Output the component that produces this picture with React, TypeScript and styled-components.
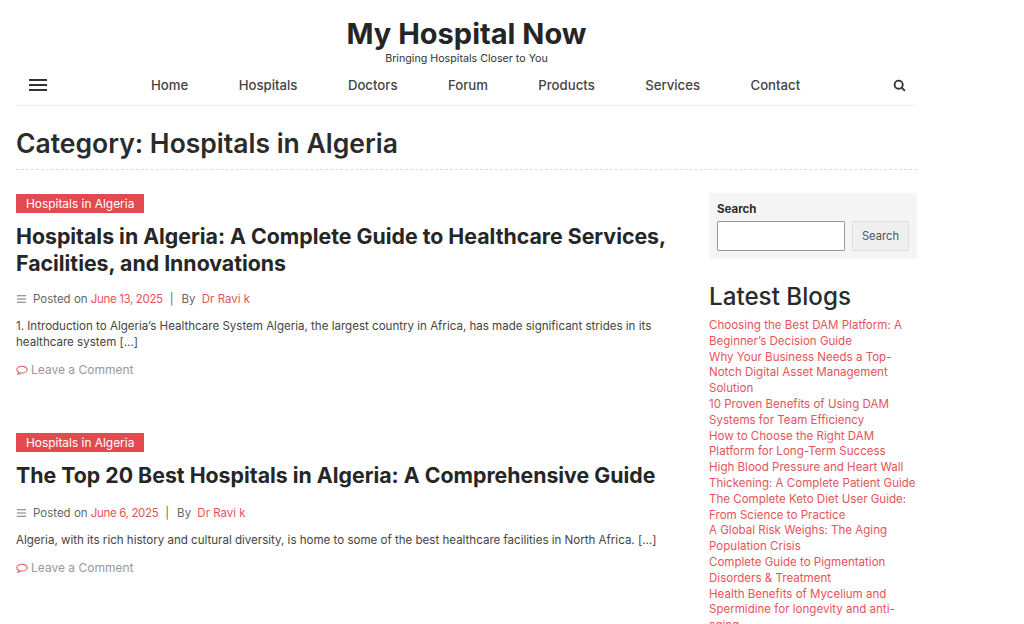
import { createGlobalStyle } from "styled-components";
import styled from "styled-components";

const NAV_ITEMS = ["Home", "Hospitals", "Doctors", "Forum", "Products", "Services", "Contact"];

const BLOGS = [
  "Choosing the Best DAM Platform: A Beginner’s Decision Guide",
  "Why Your Business Needs a Top-Notch Digital Asset Management Solution",
  "10 Proven Benefits of Using DAM Systems for Team Efficiency",
  "How to Choose the Right DAM Platform for Long-Term Success",
  "High Blood Pressure and Heart Wall Thickening: A Complete Patient Guide",
  "The Complete Keto Diet User Guide: From Science to Practice",
  "A Global Risk Weighs: The Aging Population Crisis",
  "Complete Guide to Pigmentation Disorders & Treatment",
  "Health Benefits of Mycelium and Spermidine for longevity and anti-aging",
];

const POSTS = [
  {
    title: "Hospitals in Algeria: A Complete Guide to Healthcare Services, Facilities, and Innovations",
    date: "June 13, 2025",
    metaGap: 14,
    excerpt:
      "1. Introduction to Algeria’s Healthcare System Algeria, the largest country in Africa, has made significant strides in its healthcare system […]",
  },
  {
    title: "The Top 20 Best Hospitals in Algeria: A Comprehensive Guide",
    date: "June 6, 2025",
    metaGap: 16,
    excerpt:
      "Algeria, with its rich history and cultural diversity, is home to some of the best healthcare facilities in North Africa. […]",
  },
];

export default function App() {
  return (
    <>
      <GlobalStyle />
      <Page>
        <Branding>
          <SiteTitle>My Hospital Now</SiteTitle>
          <Tagline>Bringing Hospitals Closer to You</Tagline>
        </Branding>
        <NavBar>
          <Burger aria-label="Menu">
            <span />
            <span />
            <span />
          </Burger>
          <NavList>
            {NAV_ITEMS.map((item) => (
              <NavLink key={item}>{item}</NavLink>
            ))}
          </NavList>
          <SearchIcon viewBox="0 0 24 24" aria-hidden="true">
            <circle cx="10.5" cy="10.5" r="7.5" />
            <line x1="16" y1="16" x2="22" y2="22" />
          </SearchIcon>
        </NavBar>
        <PageTitle>Category: Hospitals in Algeria</PageTitle>
        <Columns>
          <Main>
            {POSTS.map((post) => (
              <Post key={post.date}>
                <Badge>Hospitals in Algeria</Badge>
                <PostTitle>{post.title}</PostTitle>
                <Meta $gap={post.metaGap}>
                  <MetaIcon viewBox="0 0 12 10" aria-hidden="true">
                    <path d="M1 1.5h10M1 5h10M1 8.5h10" />
                  </MetaIcon>
                  Posted on <DateLink>{post.date}</DateLink>
                  <Sep>|</Sep>
                  By <Author>Dr Ravi k</Author>
                </Meta>
                <Excerpt>{post.excerpt}</Excerpt>
                <Comment>
                  <CommentIcon viewBox="0 0 14 12" aria-hidden="true">
                    <path d="M7 1C3.700 1 1 2.700 1 5c0 1.300.9 2.400 2.200 3.100-.1.8-.5 1.500-1 2.200 1.100-.2 2.200-.8 3-1.500.6.1 1.200.2 1.800.2 3.300 0 6-1.800 6-4S10.300 1 7 1z" />
                  </CommentIcon>
                  Leave a Comment
                </Comment>
              </Post>
            ))}
          </Main>
          <Sidebar>
            <SearchBox>
              <SearchLabel>Search</SearchLabel>
              <SearchRow>
                <SearchInput />
                <SearchButton>Search</SearchButton>
              </SearchRow>
            </SearchBox>
            <WidgetTitle>Latest Blogs</WidgetTitle>
            <BlogList>
              {BLOGS.map((blog) => (
                <li key={blog}>{blog}</li>
              ))}
            </BlogList>
          </Sidebar>
        </Columns>
      </Page>
    </>
  );
}

const GlobalStyle = createGlobalStyle`
  html, body {
    margin: 0;
    height: 624px;
    overflow: hidden;
    background: #fff;
  }
  body {
    font-family: Inter, "Liberation Sans", sans-serif;
    color: #2a2a2a;
  }
`;

const Page = styled.div`
  width: 901px;
  margin-left: 16px;
`;

const Branding = styled.header`
  display: flex;
  flex-direction: column;
  align-items: center;
  padding-top: 15px;
  height: 52px;
`;

const SiteTitle = styled.h1`
  margin: 0;
  font-size: 29px;
  line-height: 37px;
  font-weight: 700;
  color: #252525;
`;

const Tagline = styled.p`
  margin: -1px 0 0;
  font-size: 10.7px;
  line-height: 15px;
  color: #333;
`;

const NavBar = styled.nav`
  position: relative;
  display: flex;
  align-items: center;
  height: 38px;
  padding-left: 135px;
  border-bottom: 1px solid #eee;
`;

const Burger = styled.div`
  position: absolute;
  left: 13px;
  top: 12px;
  display: flex;
  flex-direction: column;
  gap: 3.5px;
  width: 18px;

  span {
    height: 1.5px;
    background: #333;
  }
`;

const NavList = styled.div`
  display: flex;
  gap: 50.4px;
  padding-bottom: 2px;
`;

const NavLink = styled.a`
  font-size: 13.2px;
  line-height: 20px;
  font-weight: 500;
  color: #444;
`;

const SearchIcon = styled.svg`
  position: absolute;
  right: 11px;
  top: 12px;
  width: 13px;
  height: 13px;
  fill: none;
  stroke: #333;
  stroke-width: 3.4;
`;

const PageTitle = styled.h2`
  margin: 0;
  height: 63px;
  line-height: 75px;
  font-size: 26.5px;
  font-weight: 600;
  color: #2b2b2b;
  border-bottom: 1px dashed #ddd;
`;

const Columns = styled.div`
  display: flex;
  justify-content: space-between;
  padding-top: 23px;
`;

const Main = styled.main`
  width: 662px;
  margin-top: -1px;
`;

const Post = styled.article`
  height: 239px;

  & + & {
    height: auto;
  }
`;

const Badge = styled.span`
  display: inline-block;
  height: 19px;
  padding: 0 10px;
  background: #e14b50;
  color: #fff;
  font-size: 11.9px;
  line-height: 19px;
`;

const PostTitle = styled.h3`
  margin: 10px 0 0;
  font-size: 21.3px;
  line-height: 27px;
  font-weight: 700;
  color: #262626;
`;

const Meta = styled.div<{ $gap: number }>`
  display: flex;
  align-items: center;
  margin-top: ${(props) => props.$gap}px;
  font-size: 11.5px;
  line-height: 16px;
  color: #666;
  white-space: pre;
`;

const MetaIcon = styled.svg`
  width: 11px;
  height: 10px;
  margin-right: 6px;
  fill: none;
  stroke: #777;
  stroke-width: 1.2;
`;

const RedLink = styled.a`
  color: #e5545a;
`;

const DateLink = styled(RedLink)`
  letter-spacing: -0.35px;
`;

const Author = styled(RedLink)`
  margin-left: 3px;
`;

const Sep = styled.span`
  margin: 0 8px 0 7px;
`;

const Excerpt = styled.p`
  margin: 11px 0 0;
  font-size: 11.55px;
  line-height: 16px;
  color: #444;
`;

const Comment = styled.div`
  display: flex;
  align-items: center;
  margin-top: 12px;
  font-size: 12px;
  line-height: 16px;
  color: #999;
`;

const CommentIcon = styled.svg`
  width: 12px;
  height: 11px;
  margin-right: 3px;
  fill: none;
  stroke: #e5545a;
  stroke-width: 1.2;
`;

const Sidebar = styled.aside`
  width: 208px;
`;

const SearchBox = styled.div`
  height: 66px;
  box-sizing: border-box;
  padding: 8px;
  background: #f5f5f5;
`;

const SearchLabel = styled.div`
  font-size: 11.5px;
  line-height: 16px;
  font-weight: 700;
  color: #2d2d2d;
`;

const SearchRow = styled.div`
  display: flex;
  justify-content: space-between;
  margin-top: 4px;
`;

const SearchInput = styled.input`
  box-sizing: border-box;
  width: 128px;
  height: 30px;
  background: #fff;
  border: 1px solid #999;
  border-radius: 1px;
`;

const SearchButton = styled.button`
  box-sizing: border-box;
  width: 57px;
  height: 30px;
  padding: 0;
  background: #efefef;
  border: 1px solid #ddd;
  font-family: inherit;
  font-size: 11.2px;
  color: #555;
`;

const WidgetTitle = styled.h2`
  margin: 21px 0 0;
  font-size: 24.2px;
  line-height: 33px;
  font-weight: 500;
  color: #2b2b2b;
`;

const BlogList = styled.ul`
  list-style: none;
  margin: 5px 0 0;
  padding: 0;
  font-size: 11.55px;
  line-height: 15.8px;
  color: #e5545a;
`;
